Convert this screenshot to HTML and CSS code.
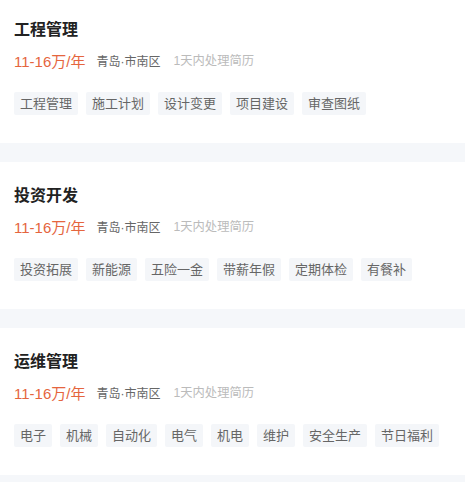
FILE: index.html
```html
<!DOCTYPE html>
<html lang="zh-CN">
<head>
    <meta charset="UTF-8">
    <meta name="viewport" content="width=device-width, initial-scale=1.0">
    <title>职位列表</title>
    <link rel="stylesheet" href="styles.css">
</head>
<body>
    <div class="job-list">
        <div class="job-card">
            <div class="job-title">工程管理</div>
            <div class="job-info">
                <span class="salary">11-16万/年</span>
                <span class="location">青岛·市南区</span>
                <span class="reply">1天内处理简历</span>
            </div>
            <div class="tags">
                <span class="tag">工程管理</span>
                <span class="tag">施工计划</span>
                <span class="tag">设计变更</span>
                <span class="tag">项目建设</span>
                <span class="tag">审查图纸</span>
            </div>
        </div>

        <div class="job-card">
            <div class="job-title">投资开发</div>
            <div class="job-info">
                <span class="salary">11-16万/年</span>
                <span class="location">青岛·市南区</span>
                <span class="reply">1天内处理简历</span>
            </div>
            <div class="tags">
                <span class="tag">投资拓展</span>
                <span class="tag">新能源</span>
                <span class="tag">五险一金</span>
                <span class="tag">带薪年假</span>
                <span class="tag">定期体检</span>
                <span class="tag">有餐补</span>
            </div>
        </div>

        <div class="job-card">
            <div class="job-title">运维管理</div>
            <div class="job-info">
                <span class="salary">11-16万/年</span>
                <span class="location">青岛·市南区</span>
                <span class="reply">1天内处理简历</span>
            </div>
            <div class="tags">
                <span class="tag">电子</span>
                <span class="tag">机械</span>
                <span class="tag">自动化</span>
                <span class="tag">电气</span>
                <span class="tag">机电</span>
                <span class="tag">维护</span>
                <span class="tag">安全生产</span>
                <span class="tag">节日福利</span>
            </div>
        </div>
    </div>
</body>
</html>
```

FILE: styles.css
```css
body {
    margin: 0;
    overflow: hidden;
    background-color: #f5f7fa;
    font-family: 'Liberation Sans', 'Noto Sans CJK SC', sans-serif;
}
.job-list {
    display: flex;
    flex-direction: column;
    gap: 19px;
    margin-top: -4px;
}
.job-card {
    background-color: #fff;
    padding: 24px 14px 28px;
}
.job-title {
    font-size: 16px;
    line-height: 20px;
    font-weight: bold;
    color: #222;
}
.job-info {
    display: flex;
    align-items: center;
    margin-top: 10px;
    height: 20px;
}
.salary {
    font-size: 15px;
    color: #e5653e;
    margin-right: 11px;
}
.location {
    font-size: 12px;
    color: #666;
    margin-right: 13px;
}
.reply {
    font-size: 12.3px;
    color: #bbb;
}
.tags {
    display: flex;
    flex-wrap: wrap;
    gap: 8px;
    margin-top: 22px;
}
.tag {
    font-size: 13px;
    line-height: 23px;
    padding: 0 6px;
    color: #666;
    background-color: #f4f6f9;
    border-radius: 2px;
}
```
